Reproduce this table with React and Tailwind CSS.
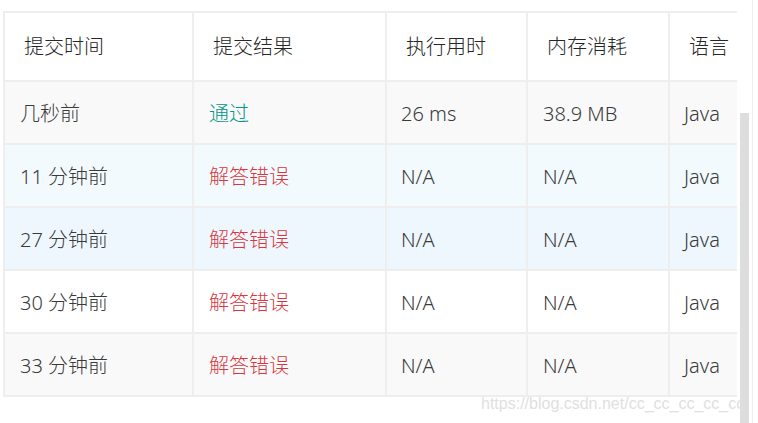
import React from 'react';

const columns = ['提交时间', '提交结果', '执行用时', '内存消耗', '语言'];

// column widths include the 2px right border
const widths = ['w-[189px]', 'w-[193px]', 'w-[141px]', 'w-[142px]', 'w-[140px]'];

const submissions = [
  { time: '几秒前', result: '通过', ok: true, runtime: '26 ms', memory: '38.9 MB', lang: 'Java', bg: 'bg-[#f9f9f9]' },
  { time: '11 分钟前', result: '解答错误', ok: false, runtime: 'N/A', memory: 'N/A', lang: 'Java', bg: 'bg-[#f3fafd]' },
  { time: '27 分钟前', result: '解答错误', ok: false, runtime: 'N/A', memory: 'N/A', lang: 'Java', bg: 'bg-[#eef7fd]' },
  { time: '30 分钟前', result: '解答错误', ok: false, runtime: 'N/A', memory: 'N/A', lang: 'Java', bg: 'bg-white' },
  { time: '33 分钟前', result: '解答错误', ok: false, runtime: 'N/A', memory: 'N/A', lang: 'Java', bg: 'bg-[#f9f9f9]' },
];

export default function App() {
  return (
    <div
      className="relative flex h-[423px] w-[758px] overflow-hidden bg-white text-[20px] font-light"
      style={{ fontFamily: '"Noto Sans", "Noto Sans CJK SC", sans-serif' }}
    >
      {/* Submissions table */}
      <div className="w-[737px] shrink-0 overflow-hidden pl-[3px] pt-[11px]">
        <div className="w-[760px] border-l-2 border-t-2 border-[#eeeeee]">
          {/* Header */}
          <div className="flex h-[69px] border-b-2 border-[#eeeeee] bg-white">
            {columns.map((col, i) => (
              <div
                key={col}
                className={`${widths[i]} flex shrink-0 items-center border-r-2 border-[#eeeeee] pl-[19px] text-[#262626]`}
              >
                {col}
              </div>
            ))}
          </div>

          {/* Rows */}
          {submissions.map((s, idx) => (
            <div key={idx} className={`flex h-[63px] border-b-2 border-[#eeeeee] ${s.bg}`}>
              <div className={`${widths[0]} flex shrink-0 items-center border-r-2 border-[#eeeeee] pl-[15px] pt-[3px] text-[#3a3a3a]`}>
                {s.time}
              </div>
              <div
                className={`${widths[1]} flex shrink-0 items-center border-r-2 border-[#eeeeee] pl-[15px] pt-[3px] ${
                  s.ok ? 'text-[#009688]' : 'text-[#d9363e]'
                }`}
              >
                {s.result}
              </div>
              <div className={`${widths[2]} flex shrink-0 items-center border-r-2 border-[#eeeeee] pl-[14px] pt-[3px] text-[#3a3a3a]`}>
                {s.runtime}
              </div>
              <div className={`${widths[3]} flex shrink-0 items-center border-r-2 border-[#eeeeee] pl-[15px] pt-[3px] text-[#3a3a3a]`}>
                {s.memory}
              </div>
              <div className={`${widths[4]} flex shrink-0 items-center border-r-2 border-[#eeeeee] pl-[14px] pt-[3px] text-[#3a3a3a]`}>
                {s.lang}
              </div>
            </div>
          ))}
        </div>
      </div>

      {/* Scrollbar */}
      <div className="flex w-[21px] shrink-0 pl-[3px]">
        <div className="flex w-[9px] flex-col">
          <div className="h-[113px]" />
          <div className="flex-1 bg-[#dddddd]" />
        </div>
        <div className="ml-[3px] w-[1px] bg-[#eeeeee]" />
      </div>

      {/* Watermark */}
      <div
        className="absolute left-[481px] top-[394px] text-[16px] font-normal leading-[20px] text-[#e0e0e0]"
        style={{ fontFamily: '"Liberation Sans", Arial, sans-serif' }}
      >
        https://blog.csdn.net/cc_cc_cc_cc_cc
      </div>
    </div>
  );
}
